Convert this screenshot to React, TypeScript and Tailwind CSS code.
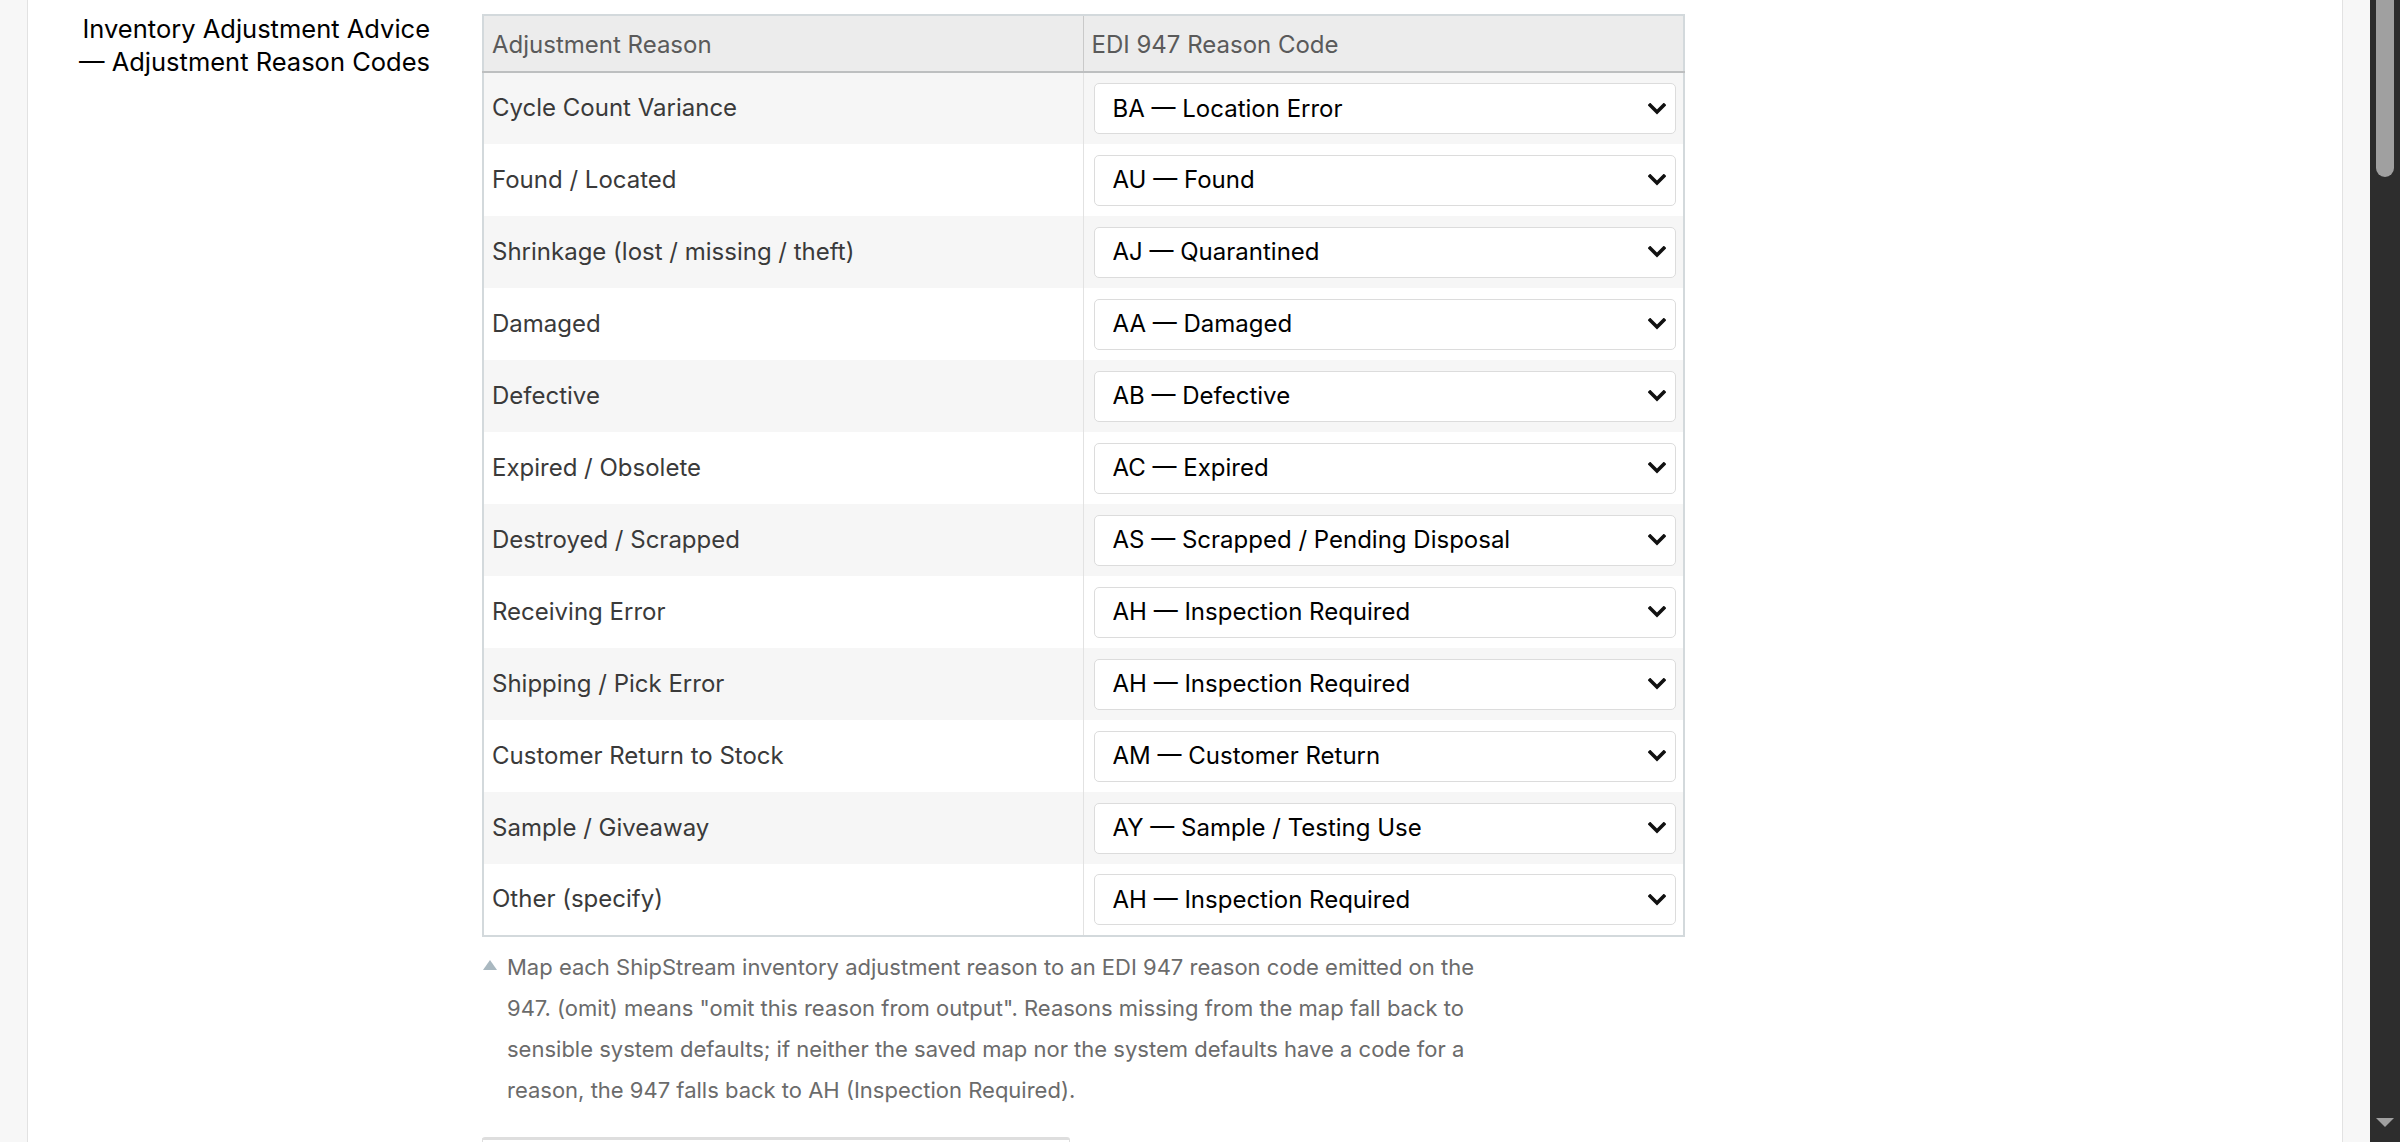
import React from 'react';

const codeOptions = [
    '(omit)',
    'AA — Damaged',
    'AB — Defective',
    'AC — Expired',
    'AH — Inspection Required',
    'AJ — Quarantined',
    'AM — Customer Return',
    'AS — Scrapped / Pending Disposal',
    'AU — Found',
    'AY — Sample / Testing Use',
    'BA — Location Error'
];

const reasons = [
    { reason: 'Cycle Count Variance', code: 'BA — Location Error' },
    { reason: 'Found / Located', code: 'AU — Found' },
    { reason: 'Shrinkage (lost / missing / theft)', code: 'AJ — Quarantined' },
    { reason: 'Damaged', code: 'AA — Damaged' },
    { reason: 'Defective', code: 'AB — Defective' },
    { reason: 'Expired / Obsolete', code: 'AC — Expired' },
    { reason: 'Destroyed / Scrapped', code: 'AS — Scrapped / Pending Disposal' },
    { reason: 'Receiving Error', code: 'AH — Inspection Required' },
    { reason: 'Shipping / Pick Error', code: 'AH — Inspection Required' },
    { reason: 'Customer Return to Stock', code: 'AM — Customer Return' },
    { reason: 'Sample / Giveaway', code: 'AY — Sample / Testing Use' },
    { reason: 'Other (specify)', code: 'AH — Inspection Required' }
];

const CodeSelect: React.FC<{ value: string }> = ({ value }) => (
    <div className="relative">
        <select
            defaultValue={value}
            className="block w-full h-[51px] appearance-none bg-white border-[1.5px] border-[#dcdcdc] rounded-[5px] pl-[18px] pr-12 text-[24px] text-black outline-none"
        >
            {codeOptions.map((opt) => (
                <option key={opt} value={opt}>{opt}</option>
            ))}
        </select>
        {/* chevron */}
        <svg className="absolute right-[10px] top-1/2 -translate-y-1/2 pointer-events-none" width="18" height="12" viewBox="0 0 18 12">
            <path d="M2.2 2.2 L9 9 L15.8 2.2" fill="none" stroke="#111" strokeWidth="3.6" strokeLinecap="square" />
        </svg>
    </div>
);

const App: React.FC = () => {
    return (
        <div className="flex w-full h-[1142px] overflow-hidden bg-[#f7f7f7] font-['Inter',sans-serif]">
            <div className="w-[27px] shrink-0" />

            <div className="flex-1 bg-white border-l-[1.5px] border-r-[1.5px] border-[#e2e2e2]">
                <div className="flex items-start">
                    <div className="w-[402px] shrink-0 pt-[12px] text-right text-[25.5px] leading-[33px] text-black">
                        Inventory Adjustment Advice
                        <br />
                        — Adjustment Reason Codes
                    </div>

                    <div className="ml-[52px] pt-[14px]">
                        <table className="w-[1203px] table-fixed border-collapse border-2 border-[#d3d9dc] text-[24px]">
                            <colgroup>
                                <col className="w-[600px]" />
                                <col />
                            </colgroup>
                            <thead>
                                <tr className="h-[57px] bg-[#ececec] border-b-2 border-[#bdbfc0]">
                                    <th className="px-[8px] pt-[2px] text-left font-normal text-[#5a5a5a] border-r-[1.5px] border-[#c9c9c9]">Adjustment Reason</th>
                                    <th className="px-[8px] pt-[2px] text-left font-normal text-[#5a5a5a]">EDI 947 Reason Code</th>
                                </tr>
                            </thead>
                            <tbody>
                                {reasons.map((row, i) => (
                                    <tr key={i} className={i % 2 === 0 ? 'h-[72px] bg-[#f6f6f6]' : 'h-[72px] bg-white'}>
                                        <td className="px-[8px] pb-[1px] align-middle text-[#3a3a3a] border-r-[1.5px] border-[#e2e2e2]">{row.reason}</td>
                                        <td className="pl-[10px] pr-[7px] align-middle">
                                            <CodeSelect value={row.code} />
                                        </td>
                                    </tr>
                                ))}
                            </tbody>
                        </table>

                        <div className="flex items-start mt-[10px]">
                            <svg className="shrink-0 mt-[13px] ml-[1px] mr-[10px]" width="14" height="10" viewBox="0 0 14 10">
                                <path d="M7 0 L14 10 L0 10 Z" fill="#a9b8c0" />
                            </svg>
                            <p className="w-[990px] text-[22px] leading-[41px] text-[#6b6b6b]">
                                Map each ShipStream inventory adjustment reason to an EDI 947 reason code emitted on the 947. (omit) means "omit this reason from output". Reasons missing from the map fall back to sensible system defaults; if neither the saved map nor the system defaults have a code for a reason, the 947 falls back to AH (Inspection Required).
                            </p>
                        </div>

                        <div className="mt-[26px] w-[588px] h-[40px] border-t-[3px] border-x-[1.5px] border-[#dedede] rounded-t-[3px]" />
                    </div>
                </div>
            </div>

            <div className="w-[27px] shrink-0" />

            {/* scrollbar */}
            <div className="w-[30px] shrink-0 bg-[#2d2d2d] flex flex-col items-center justify-between">
                <div className="w-[18px] h-[177px] bg-[#a0a0a0] rounded-b-full" />
                <svg className="mb-[15px]" width="18" height="9" viewBox="0 0 18 9">
                    <path d="M0 0 L18 0 L9 9 Z" fill="#a0a0a0" />
                </svg>
            </div>
        </div>
    );
};

export default App;
